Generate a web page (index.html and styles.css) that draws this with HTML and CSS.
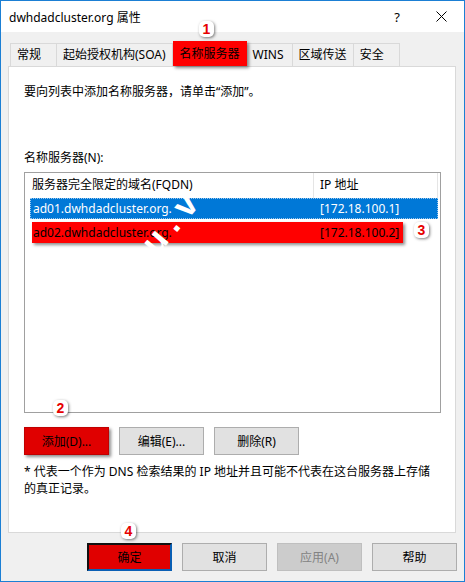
FILE: index.html
```html
<!DOCTYPE html>
<html lang="zh-CN">
<head>
  <meta charset="UTF-8" />
  <title>dwhdadcluster.org 属性</title>
  <link rel="stylesheet" href="styles.css">
</head>
<body>
  <div class="window">
    <div class="titlebar">
      <span class="title">dwhdadcluster.org 属性</span>
      <span class="title-btn help">?</span>
      <span class="title-btn close">
        <svg width="11" height="11" viewBox="0 0 11 11"><path d="M0.5 0.5 L10.5 10.5 M10.5 0.5 L0.5 10.5" stroke="#000" stroke-width="1" fill="none"/></svg>
      </span>
    </div>

    <div class="content">
      <!-- pestañas -->
      <div class="tabs">
        <div class="tab">常规</div>
        <div class="tab">起始授权机构(SOA)</div>
        <div class="tab active">名称服务器</div>
        <div class="tab">WINS</div>
        <div class="tab">区域传送</div>
        <div class="tab">安全</div>
      </div>

      <div class="panel">
        <p class="hint">要向列表中添加名称服务器，请单击“添加”。</p>
        <div class="list-label">名称服务器(N):</div>

        <div class="listbox">
          <div class="list-head">
            <div class="col-fqdn">服务器完全限定的域名(FQDN)</div>
            <div class="col-ip">IP 地址</div>
          </div>
          <div class="row selected">
            <span>ad01.dwhdadcluster.org.</span>
            <span>[172.18.100.1]</span>
          </div>
          <div class="row marked">
            <span>ad02.dwhdadcluster.org.</span>
            <span>[172.18.100.2]</span>
          </div>
        </div>

        <div class="actions">
          <button class="btn btn-red">添加(D)...</button>
          <button class="btn">编辑(E)...</button>
          <button class="btn">删除(R)</button>
        </div>

        <p class="note">* 代表一个作为 DNS 检索结果的 IP 地址并且可能不代表在这台服务器上存储的真正记录。</p>
      </div>

      <div class="footer">
        <button class="btn btn-ok">确定</button>
        <button class="btn">取消</button>
        <button class="btn" disabled>应用(A)</button>
        <button class="btn">帮助</button>
      </div>
    </div>

    <!-- marcas de pasos -->
    <span class="step step-1">1</span>
    <span class="step step-2">2</span>
    <span class="step step-3">3</span>
    <span class="step step-4">4</span>
    <span class="watermark">u.vn</span>
  </div>
</body>
</html>
```

FILE: styles.css
```css
* {
  box-sizing: border-box;
}

body {
  margin: 0;
  font-family: "Segoe UI", "Noto Sans", "Noto Sans CJK SC", sans-serif;
  font-size: 12px;
  color: #000;
  overflow: hidden;
}

.window {
  position: relative;
  width: 465px;
  height: 582px;
  border: 1px solid #1b7fd4;
  background: #f0f0f0;
  overflow: hidden;
}

.titlebar {
  height: 31px;
  background: #fff;
  display: flex;
  align-items: center;
  padding-left: 8px;
}

.title {
  flex: 1;
  font-size: 12px;
}

.title-btn {
  width: 46px;
  text-align: center;
  font-size: 13px;
}

.help {
  margin-right: -2px;
}

.close svg {
  display: block;
  margin: 0 auto;
}

.content {
  padding: 9px 8px 0 7px;
}

.tabs {
  display: flex;
  align-items: flex-end;
  height: 25px;
  padding-left: 2px;
}

.tab {
  height: 23px;
  min-width: 47px;
  padding: 0 6px;
  line-height: 21px;
  border: 1px solid #d9d9d9;
  border-bottom: none;
  margin-left: -1px;
  white-space: nowrap;
}

.tab:first-child {
  margin-left: 0;
}

.tab.active {
  height: 25px;
  line-height: 25px;
  padding: 0 7px;
  margin-left: 0;
  background: #ff0000;
  border: none;
  box-shadow: 2px 2px 3px rgba(0, 0, 0, 0.45);
  position: relative;
  z-index: 1;
}

.panel {
  width: 448px;
  height: 467px;
  background: #fff;
  border: 1px solid #d9d9d9;
  padding: 16px 14px 0 15px;
}

.hint {
  margin: 0;
  line-height: 18px;
}

.list-label {
  margin-top: 48px;
  line-height: 18px;
}

.listbox {
  margin-top: 5px;
  width: 417px;
  height: 241px;
  border: 1px solid #a0a0a0;
  background: #fff;
}

.list-head {
  display: flex;
  height: 25px;
  line-height: 24px;
}

.col-fqdn {
  width: 289px;
  padding-left: 7px;
  border-right: 1px solid #e5e5e5;
}

.col-ip {
  width: 124px;
  padding-left: 6px;
  border-right: 1px solid #e5e5e5;
}

.row {
  display: grid;
  grid-template-columns: 287px auto;
  align-items: center;
  height: 21px;
  width: 408px;
  margin-left: 5px;
  padding-left: 3px;
  white-space: nowrap;
}

.row.selected {
  background: #0078d7;
  color: #fff;
  border: 1px dotted #9cc8ee;
  padding-left: 2px;
}

.row.marked {
  background: #ff0000;
  width: 371px;
  margin-top: 3px;
  margin-left: 7px;
  padding-left: 1px;
  box-shadow: 2px 2px 3px rgba(0, 0, 0, 0.45);
}

.actions {
  display: flex;
  gap: 10px;
  margin-top: 14px;
}

.btn {
  width: 85px;
  height: 28px;
  font: inherit;
  color: #000;
  background: #e1e1e1;
  border: 1px solid #adadad;
  padding: 0;
}

.btn-red {
  background: #e00000;
  border-color: #c00000;
  box-shadow: 2px 2px 3px rgba(0, 0, 0, 0.45);
}

.btn:disabled {
  background: #cccccc;
  border-color: #bfbfbf;
  color: #838383;
}

.note {
  margin: 8px 0 0;
  line-height: 17px;
  width: 410px;
}

.footer {
  display: flex;
  justify-content: flex-end;
  gap: 10px;
  margin-top: 10px;
  margin-right: -1px;
}

.btn-ok {
  background: #e00000;
  border-style: solid;
  border-width: 2px;
  border-color: #111 #0a5fb4 #0a5fb4 #111;
}

/* marcas numeradas sobre la captura */
.step {
  position: absolute;
  width: 15px;
  height: 16px;
  background: #fff;
  border-radius: 5px;
  color: #e60000;
  font: bold 14px "Liberation Sans", Arial, sans-serif;
  line-height: 16px;
  text-align: center;
  box-shadow: 1px 1px 3px rgba(0, 0, 0, 0.5);
}

.step-1 { left: 198px; top: 20px; }
.step-2 { left: 52px; top: 399px; }
.step-3 { left: 413px; top: 221px; }
.step-4 { left: 120px; top: 522px; }

.watermark {
  position: absolute;
  left: 128px;
  top: 188px;
  color: #fff;
  font: bold 34px "Liberation Sans", Arial, sans-serif;
  letter-spacing: 9px;
  transform: rotate(-50deg);
  transform-origin: center;
}
```
